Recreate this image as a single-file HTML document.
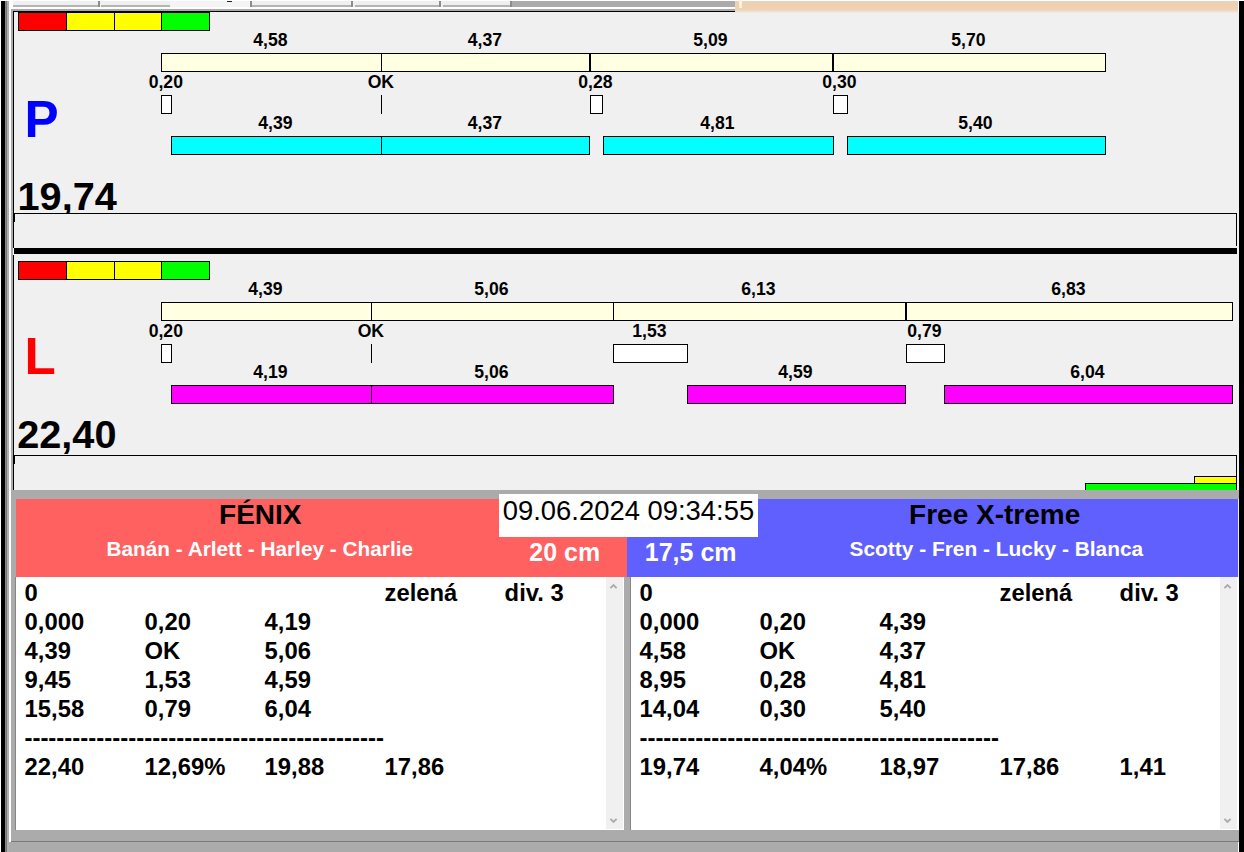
<!DOCTYPE html>
<html><head><meta charset="utf-8"><title>Timing</title>
<style>
html,body{margin:0;padding:0}
body{width:1244px;height:852px;overflow:hidden;position:relative;background:#fff;font-family:"Liberation Sans",Arial,sans-serif;font-weight:700}
body>div,body>svg{position:absolute;box-sizing:border-box}
.b{border:1px solid #000}
.t{white-space:pre;overflow:visible}
</style></head><body>
<div style="left:14px;top:12px;width:1225px;height:478px;background:#f0f0f0;"></div>
<div style="left:0px;top:0px;width:1244px;height:1px;background:#fff;"></div>
<div style="left:13px;top:1px;width:499px;height:6px;background:#f0f0f0;"></div>
<div style="left:512px;top:1px;width:223px;height:6px;background:#ababab;"></div>
<div style="left:735px;top:1px;width:503px;height:12px;background:linear-gradient(#e6d3c0 0,#f0d0b0 30%,#f0d2b4 70%,#f0e2d6 90%,#f0f0f0 100%);"></div>
<div style="left:739px;top:0px;width:3px;height:8px;background:#fff3d8;"></div>
<div style="left:13px;top:5px;width:86px;height:2px;background:#b4b4b4;"></div>
<div style="left:98px;top:1px;width:2px;height:6px;background:#8c8c8c;"></div>
<div style="left:101px;top:5px;width:69px;height:2px;background:#b4b4b4;"></div>
<div style="left:252px;top:5px;width:100px;height:2px;background:#b4b4b4;"></div>
<div style="left:351px;top:1px;width:2px;height:6px;background:#8c8c8c;"></div>
<div style="left:355px;top:5px;width:85px;height:2px;background:#b4b4b4;"></div>
<div style="left:439px;top:1px;width:2px;height:6px;background:#8c8c8c;"></div>
<div style="left:443px;top:5px;width:68px;height:2px;background:#b4b4b4;"></div>
<div style="left:510px;top:1px;width:2px;height:6px;background:#8c8c8c;"></div>
<div style="left:170px;top:1px;width:80px;height:8px;background:#f4f4f4;"></div>
<div style="left:250px;top:1px;width:2px;height:6px;background:#8c8c8c;"></div>
<div style="left:227px;top:1px;width:5px;height:1px;background:#222;"></div>
<div style="left:9px;top:7px;width:726px;height:2px;background:#fff;"></div>
<div style="left:11px;top:9px;width:724px;height:2px;background:#a9a9a9;"></div>
<div style="left:13px;top:11px;width:722px;height:1px;background:#000;"></div>
<div style="left:0px;top:0px;width:1px;height:852px;background:#fff;"></div>
<div style="left:1px;top:1px;width:4px;height:851px;background:#000;"></div>
<div style="left:5px;top:1px;width:1px;height:851px;background:#8a8a8a;"></div>
<div style="left:6px;top:1px;width:1px;height:851px;background:#767676;"></div>
<div style="left:7px;top:1px;width:2px;height:851px;background:#b0b0b0;"></div>
<div style="left:9px;top:7px;width:2px;height:835px;background:#fff;"></div>
<div style="left:11px;top:9px;width:2px;height:481px;background:#a9a9a9;"></div>
<div style="left:13px;top:11px;width:1px;height:237px;background:#000;"></div>
<div style="left:13px;top:255px;width:1px;height:235px;background:#000;"></div>
<div style="left:1239px;top:1px;width:5px;height:851px;background:#000;"></div>
<div class="b" style="left:18px;top:12px;width:49px;height:19px;background:#ff0000"></div>
<div class="b" style="left:66px;top:12px;width:49px;height:19px;background:#ffff00"></div>
<div class="b" style="left:114px;top:12px;width:48px;height:19px;background:#ffff00"></div>
<div class="b" style="left:161px;top:12px;width:49px;height:19px;background:#00ff00"></div>
<div class="b" style="left:161px;top:53px;width:221px;height:19px;background:#ffffe1"></div>
<div class="b" style="left:381px;top:53px;width:209px;height:19px;background:#ffffe1"></div>
<div class="b" style="left:590px;top:53px;width:243px;height:19px;background:#ffffe1"></div>
<div class="b" style="left:833px;top:53px;width:273px;height:19px;background:#ffffe1"></div>
<div class="b" style="left:161px;top:95px;width:11px;height:19px;background:#fff"></div>
<div style="left:381px;top:95px;width:1px;height:19px;background:#000;"></div>
<div class="b" style="left:590px;top:95px;width:13px;height:19px;background:#fff"></div>
<div class="b" style="left:833px;top:95px;width:15px;height:19px;background:#fff"></div>
<div class="b" style="left:171px;top:136px;width:211px;height:19px;background:#00ffff"></div>
<div class="b" style="left:381px;top:136px;width:209px;height:19px;background:#00ffff"></div>
<div class="b" style="left:603px;top:136px;width:231px;height:19px;background:#00ffff"></div>
<div class="b" style="left:847px;top:136px;width:259px;height:19px;background:#00ffff"></div>
<div class="t " style="top:28.90px;font-size:17.6px;line-height:22px;height:22px;color:#000;left:-29.600000000000023px;width:600px;text-align:center;">4,58</div>
<div class="t " style="top:28.90px;font-size:17.6px;line-height:22px;height:22px;color:#000;left:184.89999999999998px;width:600px;text-align:center;">4,37</div>
<div class="t " style="top:28.90px;font-size:17.6px;line-height:22px;height:22px;color:#000;left:410.4px;width:600px;text-align:center;">5,09</div>
<div class="t " style="top:28.90px;font-size:17.6px;line-height:22px;height:22px;color:#000;left:668.4px;width:600px;text-align:center;">5,70</div>
<div class="t " style="top:70.90px;font-size:17.6px;line-height:22px;height:22px;color:#000;left:-134.2px;width:600px;text-align:center;">0,20</div>
<div class="t " style="top:70.90px;font-size:17.6px;line-height:22px;height:22px;color:#000;left:80.89999999999998px;width:600px;text-align:center;">OK</div>
<div class="t " style="top:70.90px;font-size:17.6px;line-height:22px;height:22px;color:#000;left:295.4px;width:600px;text-align:center;">0,28</div>
<div class="t " style="top:70.90px;font-size:17.6px;line-height:22px;height:22px;color:#000;left:539.4px;width:600px;text-align:center;">0,30</div>
<div class="t " style="top:111.90px;font-size:17.6px;line-height:22px;height:22px;color:#000;left:-24.600000000000023px;width:600px;text-align:center;">4,39</div>
<div class="t " style="top:111.90px;font-size:17.6px;line-height:22px;height:22px;color:#000;left:184.89999999999998px;width:600px;text-align:center;">4,37</div>
<div class="t " style="top:111.90px;font-size:17.6px;line-height:22px;height:22px;color:#000;left:417.4px;width:600px;text-align:center;">4,81</div>
<div class="t " style="top:111.90px;font-size:17.6px;line-height:22px;height:22px;color:#000;left:675.4px;width:600px;text-align:center;">5,40</div>
<div class="b" style="left:18px;top:261px;width:49px;height:19px;background:#ff0000"></div>
<div class="b" style="left:66px;top:261px;width:49px;height:19px;background:#ffff00"></div>
<div class="b" style="left:114px;top:261px;width:48px;height:19px;background:#ffff00"></div>
<div class="b" style="left:161px;top:261px;width:49px;height:19px;background:#00ff00"></div>
<div class="b" style="left:161px;top:302px;width:211px;height:19px;background:#ffffe1"></div>
<div class="b" style="left:371px;top:302px;width:243px;height:19px;background:#ffffe1"></div>
<div class="b" style="left:613px;top:302px;width:293px;height:19px;background:#ffffe1"></div>
<div class="b" style="left:906px;top:302px;width:327px;height:19px;background:#ffffe1"></div>
<div class="b" style="left:161px;top:344px;width:11px;height:19px;background:#fff"></div>
<div style="left:371px;top:344px;width:1px;height:19px;background:#000;"></div>
<div class="b" style="left:613px;top:344px;width:75px;height:19px;background:#fff"></div>
<div class="b" style="left:906px;top:344px;width:39px;height:19px;background:#fff"></div>
<div class="b" style="left:171px;top:385px;width:201px;height:19px;background:#ff00ff"></div>
<div class="b" style="left:371px;top:385px;width:243px;height:19px;background:#ff00ff"></div>
<div class="b" style="left:687px;top:385px;width:219px;height:19px;background:#ff00ff"></div>
<div class="b" style="left:944px;top:385px;width:289px;height:19px;background:#ff00ff"></div>
<div class="t " style="top:277.90px;font-size:17.6px;line-height:22px;height:22px;color:#000;left:-34.60000000000002px;width:600px;text-align:center;">4,39</div>
<div class="t " style="top:277.90px;font-size:17.6px;line-height:22px;height:22px;color:#000;left:191.39999999999998px;width:600px;text-align:center;">5,06</div>
<div class="t " style="top:277.90px;font-size:17.6px;line-height:22px;height:22px;color:#000;left:458.4px;width:600px;text-align:center;">6,13</div>
<div class="t " style="top:277.90px;font-size:17.6px;line-height:22px;height:22px;color:#000;left:768.4000000000001px;width:600px;text-align:center;">6,83</div>
<div class="t " style="top:319.90px;font-size:17.6px;line-height:22px;height:22px;color:#000;left:-134.2px;width:600px;text-align:center;">0,20</div>
<div class="t " style="top:319.90px;font-size:17.6px;line-height:22px;height:22px;color:#000;left:70.89999999999998px;width:600px;text-align:center;">OK</div>
<div class="t " style="top:319.90px;font-size:17.6px;line-height:22px;height:22px;color:#000;left:349.4px;width:600px;text-align:center;">1,53</div>
<div class="t " style="top:319.90px;font-size:17.6px;line-height:22px;height:22px;color:#000;left:624.4px;width:600px;text-align:center;">0,79</div>
<div class="t " style="top:360.90px;font-size:17.6px;line-height:22px;height:22px;color:#000;left:-29.600000000000023px;width:600px;text-align:center;">4,19</div>
<div class="t " style="top:360.90px;font-size:17.6px;line-height:22px;height:22px;color:#000;left:191.39999999999998px;width:600px;text-align:center;">5,06</div>
<div class="t " style="top:360.90px;font-size:17.6px;line-height:22px;height:22px;color:#000;left:495.4px;width:600px;text-align:center;">4,59</div>
<div class="t " style="top:360.90px;font-size:17.6px;line-height:22px;height:22px;color:#000;left:787.4000000000001px;width:600px;text-align:center;">6,04</div>
<div class="t " style="top:87.96px;font-size:51.2px;line-height:64px;height:64px;color:#0000ff;left:24.5px;">P</div>
<div class="t " style="top:325.46px;font-size:51.2px;line-height:64px;height:64px;color:#ff0000;left:24.6px;">L</div>
<div class="t " style="top:171.34px;font-size:39.7px;line-height:50px;height:50px;color:#000;left:17.5px;">19,74</div>
<div class="t " style="top:408.64px;font-size:39.7px;line-height:50px;height:50px;color:#000;left:17.2px;">22,40</div>
<div style="left:14px;top:213px;width:1223px;height:35px;background:#f0f0f0;"></div>
<div style="left:14px;top:213px;width:1223px;height:1px;background:#000;"></div>
<div style="left:14px;top:213px;width:1px;height:9px;background:#000;"></div>
<div style="left:1236px;top:213px;width:1px;height:33px;background:#000;"></div>
<div style="left:14px;top:248px;width:1223px;height:6px;background:#000;"></div>
<div style="left:14px;top:455px;width:1223px;height:1px;background:#000;"></div>
<div style="left:14px;top:455px;width:1px;height:9px;background:#000;"></div>
<div style="left:1236px;top:455px;width:1px;height:35px;background:#000;"></div>
<div style="left:1194px;top:476px;width:43px;height:14px;background:#000;"></div>
<div style="left:1195px;top:477px;width:41px;height:6px;background:#ffff00;"></div>
<div style="left:1085px;top:483px;width:152px;height:7px;background:#000;"></div>
<div style="left:1086px;top:484px;width:150px;height:6px;background:#00ff00;"></div>
<div style="left:9px;top:490px;width:1230px;height:362px;background:#ababab;"></div>
<div style="left:9px;top:490px;width:2px;height:352px;background:#fff;"></div>
<div style="left:11px;top:841px;width:1228px;height:1px;background:#7a7a7a;"></div>
<div style="left:1238px;top:842px;width:1px;height:10px;background:#fff;"></div>
<div style="left:16px;top:499px;width:611px;height:78px;background:#ff6060;"></div>
<div style="left:627px;top:499px;width:611px;height:78px;background:#6060ff;"></div>
<div style="left:1238px;top:499px;width:1px;height:331px;background:#e8e8ff;"></div>
<div class="t " style="top:496.60px;font-size:28px;line-height:35px;height:35px;color:#000;left:-39.69999999999999px;width:600px;text-align:center;">FÉNIX</div>
<div class="t " style="top:535.79px;font-size:20.8px;line-height:26px;height:26px;color:#fff;left:-40.30000000000001px;width:600px;text-align:center;">Banán - Arlett - Harley - Charlie</div>
<div class="t " style="top:536.84px;font-size:25px;line-height:31px;height:31px;color:#fff;left:529.3px;">20 cm</div>
<div class="t " style="top:536.84px;font-size:25px;line-height:31px;height:31px;color:#fff;left:644.8px;">17,5 cm</div>
<div class="t " style="top:496.60px;font-size:28px;line-height:35px;height:35px;color:#000;left:694.7px;width:600px;text-align:center;">Free X-treme</div>
<div class="t " style="top:535.76px;font-size:20.9px;line-height:26px;height:26px;color:#fff;left:696.4px;width:600px;text-align:center;">Scotty - Fren - Lucky - Blanca</div>
<div style="left:11px;top:490px;width:1228px;height:9px;background:#ababab;"></div>
<div style="left:499px;top:494px;width:259px;height:43px;background:#fff;"></div>
<div class="t " style="top:493.51px;font-size:27.4px;line-height:34px;height:34px;color:#000;font-weight:400;left:502.8px;">09.06.2024 09:34:55</div>
<div style="left:15px;top:577px;width:1px;height:253px;background:#868686;"></div>
<div style="left:16px;top:577px;width:608px;height:253px;background:#fff;"></div>
<div style="left:606px;top:577px;width:17px;height:252px;background:#f0f0f0;"></div>
<svg style="left:608px;top:582px" width="11" height="8" viewBox="0 0 11 8"><path d="M2.4 6.1 L5.5 3 L8.6 6.1" fill="none" stroke="#ababab" stroke-width="1.9"/></svg>
<svg style="left:608px;top:817px" width="11" height="8" viewBox="0 0 11 8"><path d="M2.4 1.9 L5.5 5 L8.6 1.9" fill="none" stroke="#ababab" stroke-width="1.9"/></svg>
<div class="t " style="top:577.75px;font-size:23.8px;line-height:30px;height:30px;color:#000;left:24.6px;">0</div>
<div class="t " style="top:577.75px;font-size:23.8px;line-height:30px;height:30px;color:#000;left:384.6px;">zelená</div>
<div class="t " style="top:577.75px;font-size:23.8px;line-height:30px;height:30px;color:#000;left:504.6px;">div. 3</div>
<div class="t " style="top:606.75px;font-size:23.8px;line-height:30px;height:30px;color:#000;left:24.6px;">0,000</div>
<div class="t " style="top:606.75px;font-size:23.8px;line-height:30px;height:30px;color:#000;left:144.6px;">0,20</div>
<div class="t " style="top:606.75px;font-size:23.8px;line-height:30px;height:30px;color:#000;left:264.6px;">4,19</div>
<div class="t " style="top:635.75px;font-size:23.8px;line-height:30px;height:30px;color:#000;left:24.6px;">4,39</div>
<div class="t " style="top:635.75px;font-size:23.8px;line-height:30px;height:30px;color:#000;left:144.6px;">OK</div>
<div class="t " style="top:635.75px;font-size:23.8px;line-height:30px;height:30px;color:#000;left:264.6px;">5,06</div>
<div class="t " style="top:664.75px;font-size:23.8px;line-height:30px;height:30px;color:#000;left:24.6px;">9,45</div>
<div class="t " style="top:664.75px;font-size:23.8px;line-height:30px;height:30px;color:#000;left:144.6px;">1,53</div>
<div class="t " style="top:664.75px;font-size:23.8px;line-height:30px;height:30px;color:#000;left:264.6px;">4,59</div>
<div class="t " style="top:693.75px;font-size:23.8px;line-height:30px;height:30px;color:#000;left:24.6px;">15,58</div>
<div class="t " style="top:693.75px;font-size:23.8px;line-height:30px;height:30px;color:#000;left:144.6px;">0,79</div>
<div class="t " style="top:693.75px;font-size:23.8px;line-height:30px;height:30px;color:#000;left:264.6px;">6,04</div>
<div class="t " style="top:722.68px;font-size:24px;line-height:30px;height:30px;color:#000;left:24.4px;">---------------------------------------------</div>
<div class="t " style="top:751.75px;font-size:23.8px;line-height:30px;height:30px;color:#000;left:24.6px;">22,40</div>
<div class="t " style="top:751.75px;font-size:23.8px;line-height:30px;height:30px;color:#000;left:144.6px;">12,69%</div>
<div class="t " style="top:751.75px;font-size:23.8px;line-height:30px;height:30px;color:#000;left:264.6px;">19,88</div>
<div class="t " style="top:751.75px;font-size:23.8px;line-height:30px;height:30px;color:#000;left:384.6px;">17,86</div>
<div style="left:630px;top:577px;width:1px;height:253px;background:#868686;"></div>
<div style="left:631px;top:577px;width:607px;height:253px;background:#fff;"></div>
<div style="left:1220px;top:577px;width:17px;height:252px;background:#f0f0f0;"></div>
<svg style="left:1222px;top:582px" width="11" height="8" viewBox="0 0 11 8"><path d="M2.4 6.1 L5.5 3 L8.6 6.1" fill="none" stroke="#ababab" stroke-width="1.9"/></svg>
<svg style="left:1222px;top:817px" width="11" height="8" viewBox="0 0 11 8"><path d="M2.4 1.9 L5.5 5 L8.6 1.9" fill="none" stroke="#ababab" stroke-width="1.9"/></svg>
<div class="t " style="top:577.75px;font-size:23.8px;line-height:30px;height:30px;color:#000;left:639.6px;">0</div>
<div class="t " style="top:577.75px;font-size:23.8px;line-height:30px;height:30px;color:#000;left:999.6px;">zelená</div>
<div class="t " style="top:577.75px;font-size:23.8px;line-height:30px;height:30px;color:#000;left:1119.6px;">div. 3</div>
<div class="t " style="top:606.75px;font-size:23.8px;line-height:30px;height:30px;color:#000;left:639.6px;">0,000</div>
<div class="t " style="top:606.75px;font-size:23.8px;line-height:30px;height:30px;color:#000;left:759.6px;">0,20</div>
<div class="t " style="top:606.75px;font-size:23.8px;line-height:30px;height:30px;color:#000;left:879.6px;">4,39</div>
<div class="t " style="top:635.75px;font-size:23.8px;line-height:30px;height:30px;color:#000;left:639.6px;">4,58</div>
<div class="t " style="top:635.75px;font-size:23.8px;line-height:30px;height:30px;color:#000;left:759.6px;">OK</div>
<div class="t " style="top:635.75px;font-size:23.8px;line-height:30px;height:30px;color:#000;left:879.6px;">4,37</div>
<div class="t " style="top:664.75px;font-size:23.8px;line-height:30px;height:30px;color:#000;left:639.6px;">8,95</div>
<div class="t " style="top:664.75px;font-size:23.8px;line-height:30px;height:30px;color:#000;left:759.6px;">0,28</div>
<div class="t " style="top:664.75px;font-size:23.8px;line-height:30px;height:30px;color:#000;left:879.6px;">4,81</div>
<div class="t " style="top:693.75px;font-size:23.8px;line-height:30px;height:30px;color:#000;left:639.6px;">14,04</div>
<div class="t " style="top:693.75px;font-size:23.8px;line-height:30px;height:30px;color:#000;left:759.6px;">0,30</div>
<div class="t " style="top:693.75px;font-size:23.8px;line-height:30px;height:30px;color:#000;left:879.6px;">5,40</div>
<div class="t " style="top:722.68px;font-size:24px;line-height:30px;height:30px;color:#000;left:639.4px;">---------------------------------------------</div>
<div class="t " style="top:751.75px;font-size:23.8px;line-height:30px;height:30px;color:#000;left:639.6px;">19,74</div>
<div class="t " style="top:751.75px;font-size:23.8px;line-height:30px;height:30px;color:#000;left:759.6px;">4,04%</div>
<div class="t " style="top:751.75px;font-size:23.8px;line-height:30px;height:30px;color:#000;left:879.6px;">18,97</div>
<div class="t " style="top:751.75px;font-size:23.8px;line-height:30px;height:30px;color:#000;left:999.6px;">17,86</div>
<div class="t " style="top:751.75px;font-size:23.8px;line-height:30px;height:30px;color:#000;left:1119.6px;">1,41</div>
<div style="left:1237px;top:577px;width:2px;height:253px;background:#fff;"></div>
</body></html>
